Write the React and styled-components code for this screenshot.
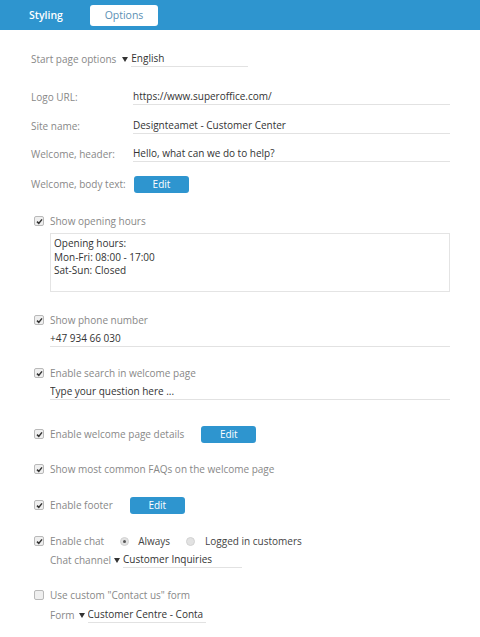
import React from "react";
import styled, { createGlobalStyle } from "styled-components";

const GlobalStyle = createGlobalStyle`
  body {
    margin: 0;
    background: #fff;
    font-family: "Open Sans", "Liberation Sans", sans-serif;
  }
`;

const Page = styled.div`
  width: 480px;
  height: 637px;
  overflow: hidden;
  font-size: 10px;
  color: #333;
`;

const TabBar = styled.div`
  height: 30px;
  background: #2e95cf;
  display: flex;
  align-items: flex-start;
  padding: 5px 0 0 29px;
  box-sizing: border-box;
`;

const Tab = styled.div`
  height: 21px;
  line-height: 21px;
  font-size: 10.5px;
  width: ${(p) => (p.active ? 68 : 61)}px;
  text-align: ${(p) => (p.active ? "center" : "left")};
  color: ${(p) => (p.active ? "#5b8fb4" : "#fff")};
  font-weight: ${(p) => (p.active ? 400 : 600)};
  background: ${(p) => (p.active ? "#fff" : "transparent")};
  border-radius: 3px;
`;

const Content = styled.div`
  padding: 20px 30px 0 31px;
`;

const Row = styled.div`
  display: flex;
  align-items: center;
  height: 18px;
  margin-top: ${(p) => p.mt || 0}px;
  padding-left: ${(p) => (p.indent ? 19 : 0)}px;
`;

const Label = styled.div`
  color: #888;
  width: ${(p) => (p.w ? `${p.w}px` : "auto")};
  flex-shrink: 0;
  white-space: nowrap;
`;

const Field = styled.div`
  flex: ${(p) => (p.w ? "none" : 1)};
  width: ${(p) => (p.w ? `${p.w}px` : "auto")};
  border-bottom: 1px solid #e2e2e2;
  color: #333;
  line-height: 15px;
  white-space: nowrap;
  overflow: hidden;
`;

const Select = styled.div`
  display: flex;
  align-items: center;
  margin-left: ${(p) => p.ml || 6}px;
`;

const Arrow = styled.span`
  width: 0;
  height: 0;
  border-left: 3.5px solid transparent;
  border-right: 3.5px solid transparent;
  border-top: 5px solid #333;
  margin: 1px 3px 0 0;
`;

const Button = styled.div`
  width: 55px;
  height: 17px;
  line-height: 17px;
  background: #2e95cf;
  color: #fff;
  text-align: center;
  border-radius: 3px;
  margin-left: ${(p) => p.ml || 0}px;
`;

const Box = styled.div`
  width: 8px;
  height: 8px;
  margin: 0 6px 0 3px;
  border: 1px solid #b9b9b9;
  border-radius: 2px;
  background: #efefef;
  flex-shrink: 0;
  display: flex;
  align-items: center;
  justify-content: center;
`;

const CheckText = styled.span`
  color: #888;
  white-space: nowrap;
`;

const Radio = styled.span`
  width: 9px;
  height: 9px;
  border-radius: 50%;
  background: #e2e2e2;
  border: 1px solid #d2d2d2;
  box-sizing: border-box;
  display: inline-flex;
  align-items: center;
  justify-content: center;
  margin: 0 ${(p) => p.mr || 9}px 0 ${(p) => p.ml || 0}px;
  &::after {
    content: "";
    width: 3px;
    height: 3px;
    border-radius: 50%;
    background: ${(p) => (p.on ? "#555" : "transparent")};
  }
`;

const RadioText = styled.span`
  color: #444;
`;

const TextArea = styled.div`
  margin: 3px 0 0 19px;
  height: 59px;
  border: 1px solid #e4e4e4;
  padding: 3px 3px;
  box-sizing: border-box;
  line-height: 13.5px;
  color: #333;
`;

function Check({ checked = true, children }) {
  return (
    <>
      <Box>
        {checked && (
          <svg width="7" height="7" viewBox="0 0 7 7">
            <path d="M1 3.6 L2.8 5.4 L6 1.4" stroke="#333" strokeWidth="1.5" fill="none" />
          </svg>
        )}
      </Box>
      <CheckText>{children}</CheckText>
    </>
  );
}

export default function App() {
  return (
    <Page>
      <GlobalStyle />
      <TabBar>
        <Tab>Styling</Tab>
        <Tab active>Options</Tab>
      </TabBar>
      <Content>
        <Row>
          <Label>Start page options</Label>
          <Select>
            <Arrow />
            <Field w={117}>English</Field>
          </Select>
        </Row>

        <Row mt={20}>
          <Label w={102}>Logo URL:</Label>
          <Field>https://www.superoffice.com/</Field>
        </Row>
        <Row mt={11}>
          <Label w={102}>Site name:</Label>
          <Field>Designteamet - Customer Center</Field>
        </Row>
        <Row mt={10}>
          <Label w={102}>Welcome, header:</Label>
          <Field>Hello, what can we do to help?</Field>
        </Row>
        <Row mt={12}>
          <Label w={103}>Welcome, body text:</Label>
          <Button>Edit</Button>
        </Row>

        <Row mt={19}>
          <Check>Show opening hours</Check>
        </Row>
        <TextArea>
          Opening hours:
          <br />
          Mon-Fri: 08:00 - 17:00
          <br />
          Sat-Sun: Closed
        </TextArea>

        <Row mt={19}>
          <Check>Show phone number</Check>
        </Row>
        <Row indent mt={1}>
          <Field>+47 934 66 030</Field>
        </Row>

        <Row mt={16}>
          <Check>Enable search in welcome page</Check>
        </Row>
        <Row indent mt={1}>
          <Field>Type your question here ...</Field>
        </Row>

        <Row mt={24}>
          <Check>Enable welcome page details</Check>
          <Button ml={17}>Edit</Button>
        </Row>

        <Row mt={17}>
          <Check>Show most common FAQs on the welcome page</Check>
        </Row>

        <Row mt={18}>
          <Check>Enable footer</Check>
          <Button ml={17}>Edit</Button>
        </Row>

        <Row mt={18}>
          <Check>Enable chat</Check>
          <Radio on ml={16} />
          <RadioText>Always</RadioText>
          <Radio ml={16} mr={10} />
          <RadioText>Logged in customers</RadioText>
        </Row>
        <Row indent mt={1}>
          <Label>Chat channel</Label>
          <Select ml={3}>
            <Arrow />
            <Field w={119}>Customer Inquiries</Field>
          </Select>
        </Row>

        <Row mt={17}>
          <Check checked={false}>Use custom "Contact us" form</Check>
        </Row>
        <Row indent mt={2}>
          <Label>Form</Label>
          <Select ml={4}>
            <Arrow />
            <Field w={118}>Customer Centre - Conta</Field>
          </Select>
        </Row>
      </Content>
    </Page>
  );
}
